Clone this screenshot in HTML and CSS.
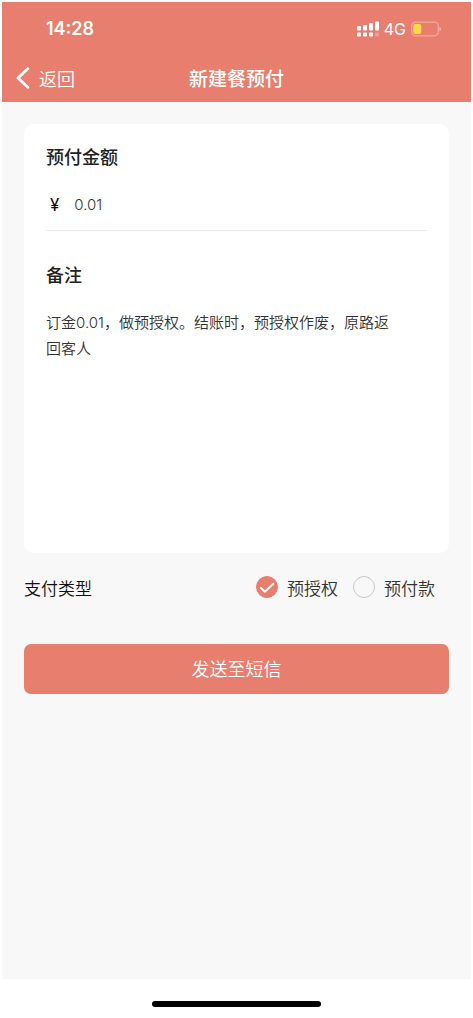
FILE: index.html
```html
<!DOCTYPE html>
<html lang="zh-CN">
<head>
<meta charset="utf-8">
<meta name="viewport" content="width=device-width, initial-scale=1">
<title>新建餐预付</title>
<link rel="stylesheet" href="styles.css">
</head>
<body>
<div class="screen">
  <header class="header">
    <div class="status">
      <span class="clock">14:28</span>
      <div class="indicators">
        <svg class="signal" width="22" height="16" viewBox="0 0 22 16" fill="#fff" aria-hidden="true">
          <rect x="0" y="5" width="4" height="4.5" rx="1"/>
          <rect x="6" y="4" width="4" height="5.5" rx="1"/>
          <rect x="12" y="2.300" width="4" height="7.200" rx="1"/>
          <rect x="18" y="0.500" width="4" height="9" rx="1"/>
          <rect x="0" y="11.500" width="4" height="4" rx="1"/>
          <rect x="6" y="11.500" width="4" height="4" rx="1"/>
          <rect x="12" y="11.500" width="4" height="4" rx="1"/>
          <rect x="18" y="11.500" width="4" height="4" rx="1" opacity=".25"/>
        </svg>
        <span class="network">4G</span>
        <svg class="battery" width="30" height="16" viewBox="0 0 30 16" aria-hidden="true">
          <rect x=".7" y="1.200" width="26.600" height="13.600" rx="4" fill="none" stroke="#fff" stroke-opacity=".35" stroke-width="1.200"/>
          <rect x="2.300" y="3" width="8" height="10" rx="2" fill="#f8d84a"/>
          <path d="M28.500 6v4c1-.3 1.300-1 1.300-2s-.3-1.700-1.300-2z" fill="#fff" fill-opacity=".5"/>
        </svg>
      </div>
    </div>
    <nav class="nav">
      <button class="back" type="button">
        <svg width="14" height="22" viewBox="0 0 14 22" fill="none" stroke="#fff" stroke-width="2.800" stroke-linecap="round" stroke-linejoin="round" aria-hidden="true"><path d="M11.800 1.700 2 11l9.800 9.300"/></svg>
        <span>返回</span>
      </button>
      <h1 class="title">新建餐预付</h1>
    </nav>
  </header>

  <form class="form">
    <section class="card">
      <label class="heading" for="amount">预付金额</label>
      <div class="amount">
        <span class="currency">¥</span>
        <input class="amount-input" id="amount" type="text" inputmode="decimal" value="0.01">
      </div>
      <label class="heading" for="note">备注</label>
      <textarea class="note" id="note">订金0.01，做预授权。结账时，预授权作废，原路返回客人</textarea>
    </section>

    <fieldset class="payment" aria-labelledby="pay-type">
      <span class="payment-title" id="pay-type">支付类型</span>
      <label class="option">
        <input class="radio" type="radio" name="type" checked>
        <svg class="tick" width="22" height="22" viewBox="0 0 22 22" fill="none" stroke="#fff" stroke-width="2" stroke-linecap="round" stroke-linejoin="round" aria-hidden="true"><path d="m5 12 3.900 3.800L17.300 7.800"/></svg>
        <span>预授权</span>
      </label>
      <label class="option">
        <input class="radio" type="radio" name="type">
        <svg class="tick" width="22" height="22" viewBox="0 0 22 22" fill="none" stroke="#fff" stroke-width="2" stroke-linecap="round" stroke-linejoin="round" aria-hidden="true"><path d="m5 12 3.900 3.800L17.300 7.800"/></svg>
        <span>预付款</span>
      </label>
    </fieldset>

    <button class="submit" type="button">发送至短信</button>
  </form>

  <footer class="home"><div class="home-bar"></div></footer>
</div>
</body>
</html>
```
FILE: styles.css
```css
* {
  box-sizing: border-box;
}

body {
  margin: 0;
  background: #fff;
  color: #333;
  font-family: Inter, "Noto Sans CJK SC", sans-serif;
}

button,
input,
textarea {
  margin: 0;
  padding: 0;
  border: 0;
  outline: 0;
  background: none;
  color: inherit;
  font: inherit;
}

.screen {
  display: flex;
  flex-direction: column;
  min-height: 100vh;
  padding: 2px 2px 0;
}

.header {
  background: #e87f6e;
  color: #fff;
}

.status {
  display: flex;
  align-items: center;
  justify-content: space-between;
  height: 53px;
  padding: 0 30px 0 44px;
}

.clock {
  font-size: 18px;
  font-weight: 600;
}

.indicators {
  display: flex;
  align-items: center;
  gap: 5px;
}

.network {
  font-size: 16px;
  font-weight: 400;
}

.nav {
  display: grid;
  grid-template-columns: 1fr auto 1fr;
  align-items: center;
  height: 47px;
  padding: 0 14px 2px;
}

.back {
  display: flex;
  align-items: center;
  justify-self: start;
  gap: 9px;
  font-size: 18px;
  font-weight: 350;
}

.title {
  margin: 0;
  font-size: 19px;
  font-weight: 500;
}

.form {
  flex: 1;
  padding: 22px;
  background: #f8f8f8;
}

.card {
  display: flex;
  flex-direction: column;
  height: 429px;
  padding: 20px 22px;
  border-radius: 10px;
  background: #fff;
}

.heading {
  color: #222;
  font-size: 18px;
  font-weight: 500;
  line-height: 28px;
}

.amount {
  display: flex;
  align-items: center;
  gap: 15px;
  height: 59px;
  margin-bottom: 31px;
  padding: 7px 4px 0;
  border-bottom: 1px solid #ececec;
}

.currency {
  color: #111;
  font-size: 17px;
}

.amount-input {
  flex: 1;
  min-width: 0;
  font-size: 15px;
  font-weight: 350;
}

.note {
  flex: 1;
  margin-top: 20px;
  padding-right: 28px;
  resize: none;
  font-size: 15px;
  font-weight: 350;
  line-height: 26px;
}

.payment {
  display: flex;
  align-items: center;
  gap: 15px;
  height: 70px;
  margin: 0;
  padding: 0 14px 2px 0;
  border: 0;
  font-size: 17px;
}

.payment-title {
  margin-right: auto;
  color: #111;
  font-weight: 350;
}

.option {
  display: grid;
  grid-template-columns: 22px auto;
  align-items: center;
  column-gap: 9px;
  font-weight: 350;
}

.radio,
.tick {
  grid-area: 1 / 1;
}

.radio {
  width: 22px;
  height: 22px;
  border: 1px solid #c8c8c8;
  border-radius: 50%;
  appearance: none;
}

.radio:checked {
  border-color: #e87f6e;
  background: #e87f6e;
}

.tick {
  visibility: hidden;
  pointer-events: none;
}

.radio:checked + .tick {
  visibility: visible;
}

.submit {
  display: block;
  width: 100%;
  height: 50px;
  margin-top: 21px;
  padding-bottom: 2px;
  border-radius: 7px;
  background: #e87f6e;
  color: #fff;
  font-size: 18px;
  font-weight: 350;
}

.home {
  display: flex;
  justify-content: center;
  height: 39px;
  padding-top: 22px;
}

.home-bar {
  width: 36%;
  height: 6px;
  border-radius: 3px;
  background: #000;
}
```
